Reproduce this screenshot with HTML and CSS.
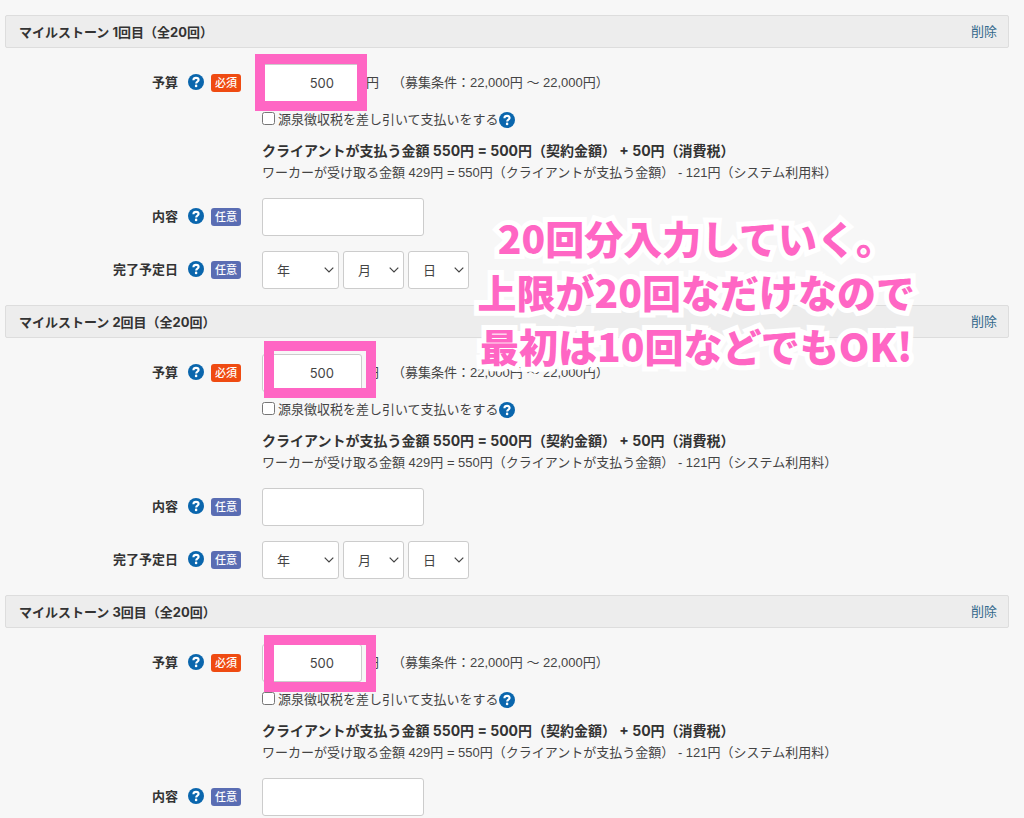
FILE: index.html
```
<!DOCTYPE html>
<html lang="ja">
<head>
    <meta charset="UTF-8">
    <meta name="viewport" content="width=device-width, initial-scale=1.0">
    <title>マイルストーン</title>
    <link rel="stylesheet" href="styles.css">
</head>
<body>
    <svg class="sprite" width="0" height="0" aria-hidden="true">
        <symbol id="help-icon" viewBox="0 0 16 16">
            <circle cx="8" cy="8" r="8" fill="#0a66ad"/>
            <path d="M5.4 6.2C5.5 4.7 6.5 3.9 8 3.9c1.5 0 2.6.8 2.6 2.1 0 1.7-2.4 1.7-2.4 3.4" fill="none" stroke="#fff" stroke-width="2.1"/>
            <circle cx="8.1" cy="11.9" r="1.3" fill="#fff"/>
        </symbol>
    </svg>

    <form class="milestones">
        <section class="milestone">
            <div class="milestone-header">
                <h2>マイルストーン 1回目（全20回）</h2>
                <a href="#">削除</a>
            </div>
            <div class="row">
                <div class="row-label">
                    <label for="budget1">予算</label>
                    <svg class="help"><use href="#help-icon"/></svg>
                    <span class="badge required">必須</span>
                </div>
                <div class="row-field">
                    <div class="budget">
                        <input type="text" id="budget1" class="input-field amount" value="500">
                        <span>円</span>
                        <span class="condition">（募集条件：22,000円 ～ 22,000円）</span>
                        <div class="marker marker-first"></div>
                    </div>
                    <div class="tax">
                        <input type="checkbox" id="tax1">
                        <label for="tax1">源泉徴収税を差し引いて支払いをする</label>
                        <svg class="help"><use href="#help-icon"/></svg>
                    </div>
                    <p class="client-total">クライアントが支払う金額 550円 = 500円（契約金額） + 50円（消費税）</p>
                    <p class="worker-total">ワーカーが受け取る金額 429円 = 550円（クライアントが支払う金額） - 121円（システム利用料）</p>
                </div>
            </div>
            <div class="row">
                <div class="row-label">
                    <label for="content1">内容</label>
                    <svg class="help"><use href="#help-icon"/></svg>
                    <span class="badge optional">任意</span>
                </div>
                <div class="row-field">
                    <input type="text" id="content1" class="input-field content">
                </div>
            </div>
            <div class="row">
                <div class="row-label">
                    <label for="year1">完了予定日</label>
                    <svg class="help"><use href="#help-icon"/></svg>
                    <span class="badge optional">任意</span>
                </div>
                <div class="row-field dates">
                    <select id="year1" class="input-field year"><option>年</option></select>
                    <select class="input-field" aria-label="月"><option>月</option></select>
                    <select class="input-field" aria-label="日"><option>日</option></select>
                </div>
            </div>
        </section>

        <section class="milestone">
            <div class="milestone-header">
                <h2>マイルストーン 2回目（全20回）</h2>
                <a href="#">削除</a>
            </div>
            <div class="row">
                <div class="row-label">
                    <label for="budget2">予算</label>
                    <svg class="help"><use href="#help-icon"/></svg>
                    <span class="badge required">必須</span>
                </div>
                <div class="row-field">
                    <div class="budget">
                        <input type="text" id="budget2" class="input-field amount" value="500">
                        <span>円</span>
                        <span class="condition">（募集条件：22,000円 ～ 22,000円）</span>
                        <div class="marker marker-second"></div>
                    </div>
                    <div class="tax">
                        <input type="checkbox" id="tax2">
                        <label for="tax2">源泉徴収税を差し引いて支払いをする</label>
                        <svg class="help"><use href="#help-icon"/></svg>
                    </div>
                    <p class="client-total">クライアントが支払う金額 550円 = 500円（契約金額） + 50円（消費税）</p>
                    <p class="worker-total">ワーカーが受け取る金額 429円 = 550円（クライアントが支払う金額） - 121円（システム利用料）</p>
                </div>
            </div>
            <div class="row">
                <div class="row-label">
                    <label for="content2">内容</label>
                    <svg class="help"><use href="#help-icon"/></svg>
                    <span class="badge optional">任意</span>
                </div>
                <div class="row-field">
                    <input type="text" id="content2" class="input-field content">
                </div>
            </div>
            <div class="row">
                <div class="row-label">
                    <label for="year2">完了予定日</label>
                    <svg class="help"><use href="#help-icon"/></svg>
                    <span class="badge optional">任意</span>
                </div>
                <div class="row-field dates">
                    <select id="year2" class="input-field year"><option>年</option></select>
                    <select class="input-field" aria-label="月"><option>月</option></select>
                    <select class="input-field" aria-label="日"><option>日</option></select>
                </div>
            </div>
        </section>

        <section class="milestone">
            <div class="milestone-header">
                <h2>マイルストーン 3回目（全20回）</h2>
                <a href="#">削除</a>
            </div>
            <div class="row">
                <div class="row-label">
                    <label for="budget3">予算</label>
                    <svg class="help"><use href="#help-icon"/></svg>
                    <span class="badge required">必須</span>
                </div>
                <div class="row-field">
                    <div class="budget">
                        <input type="text" id="budget3" class="input-field amount" value="500">
                        <span>円</span>
                        <span class="condition">（募集条件：22,000円 ～ 22,000円）</span>
                        <div class="marker marker-third"></div>
                    </div>
                    <div class="tax">
                        <input type="checkbox" id="tax3">
                        <label for="tax3">源泉徴収税を差し引いて支払いをする</label>
                        <svg class="help"><use href="#help-icon"/></svg>
                    </div>
                    <p class="client-total">クライアントが支払う金額 550円 = 500円（契約金額） + 50円（消費税）</p>
                    <p class="worker-total">ワーカーが受け取る金額 429円 = 550円（クライアントが支払う金額） - 121円（システム利用料）</p>
                </div>
            </div>
            <div class="row">
                <div class="row-label">
                    <label for="content3">内容</label>
                    <svg class="help"><use href="#help-icon"/></svg>
                    <span class="badge optional">任意</span>
                </div>
                <div class="row-field">
                    <input type="text" id="content3" class="input-field content">
                </div>
            </div>
        </section>

        <p class="note">20回分入力していく。<br>上限が20回なだけなので<br>最初は10回などでもOK!</p>
    </form>
</body>
</html>
```
FILE: styles.css
```
* {
    box-sizing: border-box;
}

body {
    margin: 0;
    background-color: #f7f7f7;
    color: #444;
    font-family: "Liberation Sans", "Noto Sans CJK JP", sans-serif;
    font-size: 13px;
    line-height: 20px;
}

.sprite {
    position: absolute;
}

.milestones {
    position: relative;
    padding: 15px 15px 0 5px;
}

.milestone {
    display: flex;
    flex-direction: column;
    gap: 15px;
    margin-bottom: 16px;
}

.milestone:last-of-type {
    margin-bottom: 0;
}

.milestone-header {
    display: flex;
    justify-content: space-between;
    align-items: center;
    height: 33px;
    padding: 0 11px 0 13px;
    background-color: #ededed;
    border: 1px solid #ddd;
    border-radius: 2px;
    margin-bottom: 1px;
}

.milestone-header h2 {
    margin: 0;
    font-family: Inter, "Noto Sans CJK JP", sans-serif;
    font-size: 13px;
    color: #333;
}

.milestone-header a {
    color: #33698c;
    text-decoration: none;
}

.row {
    display: grid;
    grid-template-columns: 236px 1fr;
    column-gap: 21px;
}

.row-label {
    display: flex;
    justify-content: flex-end;
    align-items: center;
    height: 38px;
}

.row-label label {
    font-weight: bold;
    color: #333;
}

.help {
    flex: none;
    width: 16px;
    height: 16px;
}

.row-label .help {
    margin: 0 7px 2px 10px;
}

.badge {
    width: 30px;
    height: 18px;
    border-radius: 3px;
    color: white;
    font-size: 11px;
    font-weight: 500;
    line-height: 18px;
    text-align: center;
}

.required {
    background-color: #ef4b12;
}

.optional {
    background-color: #5a6db3;
}

.input-field {
    height: 38px;
    margin: 0;
    background-color: white;
    border: 1px solid #ccc;
    border-radius: 3px;
    color: #444;
    font-family: Inter, "Noto Sans CJK JP", sans-serif;
    font-size: 13px;
}

.budget {
    position: relative;
    display: flex;
    align-items: center;
    gap: 4px;
    margin-bottom: 7px;
}

.amount {
    width: 100px;
    padding: 0 27px 0 8px;
    text-align: right;
}

.condition {
    margin-left: 9px;
}

.content {
    display: block;
    width: 162px;
    padding: 0 8px;
}

.tax {
    display: flex;
    align-items: center;
    height: 22px;
    margin-bottom: 10px;
}

.tax input {
    width: 13px;
    height: 13px;
    margin: 0 3px 4px 0;
}

.client-total {
    margin: 0 0 2px;
    color: #333;
    font-family: Inter, "Noto Sans CJK JP", sans-serif;
    font-size: 14px;
    font-weight: bold;
}

.worker-total {
    margin: 0;
}

.dates {
    display: flex;
    gap: 4px;
}

select.input-field {
    width: 61px;
    padding: 0 20px 0 14px;
    appearance: none;
    background-image: url("data:image/svg+xml,%3Csvg xmlns='http://www.w3.org/2000/svg' width='10' height='6'%3E%3Cpath d='M.7.7 5 5 9.3.7' fill='none' stroke='%23444' stroke-width='1.2'/%3E%3C/svg%3E");
    background-position: right 4px center;
    background-repeat: no-repeat;
}

select.year {
    width: 77px;
}

/* pink highlight frames */
.marker {
    position: absolute;
    width: 112px;
    height: 57px;
    border: 10px solid #ff66c4;
    pointer-events: none;
}

.marker-first {
    left: -7px;
    top: -10px;
}

.marker-second {
    left: 2px;
    top: -13px;
}

.marker-third {
    left: 2px;
    top: -9px;
}

.note {
    position: absolute;
    left: 68%;
    top: 210px;
    transform: translateX(-50%);
    margin: 0;
    color: #ff66c4;
    font-family: "Noto Sans CJK JP", sans-serif;
    font-size: 39px;
    font-weight: 900;
    line-height: 54px;
    text-align: center;
    white-space: nowrap;
    -webkit-text-stroke: 10px white;
    paint-order: stroke fill;
}
```
